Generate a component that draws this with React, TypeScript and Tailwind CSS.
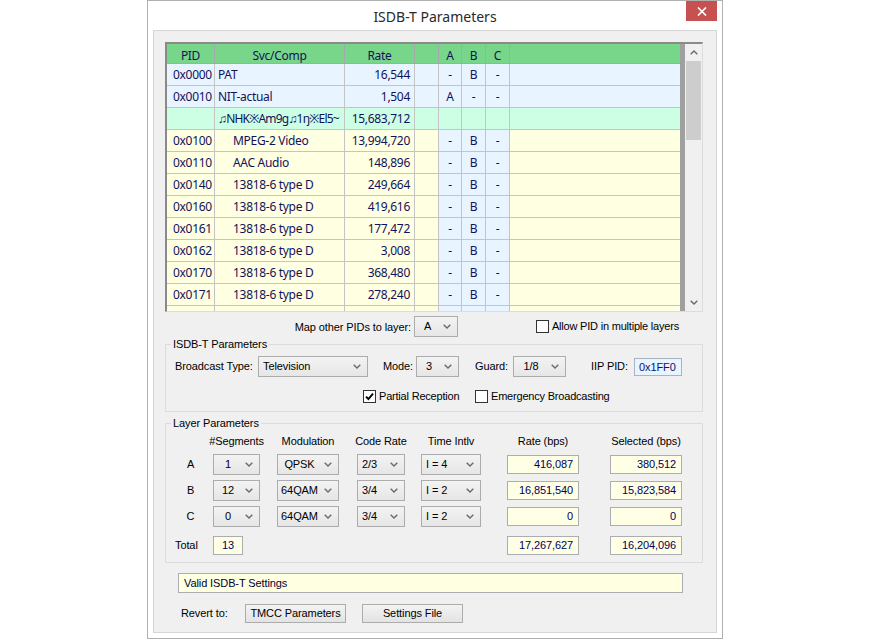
import React from 'react';

type Kind = 'psi' | 'svc' | 'comp';
interface Row { pid: string; svc: string; rate: string; a: string; b: string; c: string; kind: Kind; indent?: boolean }

const rows: Row[] = [
  { pid: '0x0000', svc: 'PAT', rate: '16,544', a: '-', b: 'B', c: '-', kind: 'psi' },
  { pid: '0x0010', svc: 'NIT-actual', rate: '1,504', a: 'A', b: '-', c: '-', kind: 'psi' },
  { pid: '', svc: '♫NHK※Am9g♫1ŋ※El5~', rate: '15,683,712', a: '', b: '', c: '', kind: 'svc' },
  { pid: '0x0100', svc: 'MPEG-2 Video', rate: '13,994,720', a: '-', b: 'B', c: '-', kind: 'comp', indent: true },
  { pid: '0x0110', svc: 'AAC Audio', rate: '148,896', a: '-', b: 'B', c: '-', kind: 'comp', indent: true },
  { pid: '0x0140', svc: '13818-6 type D', rate: '249,664', a: '-', b: 'B', c: '-', kind: 'comp', indent: true },
  { pid: '0x0160', svc: '13818-6 type D', rate: '419,616', a: '-', b: 'B', c: '-', kind: 'comp', indent: true },
  { pid: '0x0161', svc: '13818-6 type D', rate: '177,472', a: '-', b: 'B', c: '-', kind: 'comp', indent: true },
  { pid: '0x0162', svc: '13818-6 type D', rate: '3,008', a: '-', b: 'B', c: '-', kind: 'comp', indent: true },
  { pid: '0x0170', svc: '13818-6 type D', rate: '368,480', a: '-', b: 'B', c: '-', kind: 'comp', indent: true },
  { pid: '0x0171', svc: '13818-6 type D', rate: '278,240', a: '-', b: 'B', c: '-', kind: 'comp', indent: true },
  { pid: '', svc: '', rate: '', a: '', b: '', c: '', kind: 'comp' },
];

function rowBg(kind: Kind) {
  if (kind === 'psi') return 'bg-[#e8f4ff]';
  if (kind === 'svc') return 'bg-[#ccffe4]';
  return 'bg-[#ffffe2]';
}
function abcBg(kind: Kind) {
  if (kind === 'svc') return 'bg-[#ccffe4]';
  return 'bg-[#e8f4ff]';
}

function Chevron({ up = false }: { up?: boolean }) {
  return (
    <svg width="8" height="5" viewBox="0 0 8 5">
      <polyline
        points={up ? '0.7,4.3 4,1 7.3,4.3' : '0.7,0.7 4,4 7.3,0.7'}
        fill="none"
        stroke="#6a6a6a"
        strokeWidth="1.4"
      />
    </svg>
  );
}

function Select({ value, w, align = 'center' }: { value: string; w: string; align?: 'center' | 'left' }) {
  return (
    <div className={`${w} h-[21px] shrink-0 flex items-center border border-[#acacac] bg-linear-to-b from-[#f3f3f3] to-[#e6e6e6] text-black`}>
      <span className={align === 'left' ? 'flex-1 pl-[4px] text-left whitespace-nowrap' : 'flex-1 text-center whitespace-nowrap'}>{value}</span>
      <span className="w-[17px] flex justify-center pr-[3px]">
        <Chevron />
      </span>
    </div>
  );
}

function Check({ checked = false }: { checked?: boolean }) {
  return (
    <span className="w-[13px] h-[13px] shrink-0 border border-[#333333] bg-white flex items-center justify-center">
      {checked && (
        <svg width="9" height="9" viewBox="0 0 9 9">
          <path d="M1 4.6 L3.4 7 L8 1.6" fill="none" stroke="#000" strokeWidth="1.9" />
        </svg>
      )}
    </span>
  );
}

function Field({ value, w, align = 'right' }: { value: string; w: string; align?: 'right' | 'center' }) {
  return (
    <div className={`${w} h-[19px] shrink-0 border border-[#abadb3] bg-[#ffffe6] text-[#00005a] leading-[17px] ${align === 'right' ? 'text-right pr-[5px]' : 'text-center'}`}>
      {value}
    </div>
  );
}

function Grid() {
  return (
    <div className="w-[538px] h-[270px] flex border-t-2 border-l-2 border-r border-b border-t-[#8a8a8a] border-l-[#8a8a8a] border-r-[#dcdcdc] border-b-[#dcdcdc] font-['Noto_Sans',sans-serif] text-[12px] tracking-[-0.3px] text-[#12125a]">
      <div className="w-[513px] h-full overflow-hidden flex flex-col">
        <div className="h-[20px] shrink-0 flex bg-[#78d68b] border-b border-[#a8a8a8] leading-[19px] pt-[2px]">
          <div className="w-[48px] text-center border-r border-[#a8a8a8] -mt-[2px] pt-[2px]">PID</div>
          <div className="w-[130px] text-center border-r border-[#a8a8a8] -mt-[2px] pt-[2px]">Svc/Comp</div>
          <div className="w-[70px] text-center border-r border-[#a8a8a8] -mt-[2px] pt-[2px]">Rate</div>
          <div className="w-[24px] border-r border-[#a8a8a8] -mt-[2px]" />
          <div className="w-[23px] text-center border-r border-[#a8a8a8] -mt-[2px] pt-[2px]">A</div>
          <div className="w-[24px] text-center border-r border-[#a8a8a8] -mt-[2px] pt-[2px]">B</div>
          <div className="w-[24px] text-center border-r border-[#a8a8a8] -mt-[2px] pt-[2px]">C</div>
          <div className="flex-1" />
        </div>
        {rows.map((r, i) => (
          <div key={i} className={`h-[22px] shrink-0 flex border-b border-[#c4c4c4] leading-[20px] ${rowBg(r.kind)}`}>
            <div className="w-[48px] pl-[6px] pt-[1px] border-r border-[#c4c4c4]">{r.pid}</div>
            <div className={`w-[130px] pt-[1px] whitespace-nowrap overflow-hidden border-r border-[#c4c4c4] ${r.indent ? 'pl-[18px]' : 'pl-[3px]'} ${r.kind === 'svc' ? 'tracking-[-0.8px]' : ''}`}>{r.svc}</div>
            <div className="w-[70px] pt-[1px] text-right pr-[4px] border-r border-[#c4c4c4]">{r.rate}</div>
            <div className="w-[24px] border-r border-[#c4c4c4]" />
            <div className={`w-[23px] pt-[1px] text-center border-r border-[#c4c4c4] ${abcBg(r.kind)}`}>{r.a}</div>
            <div className={`w-[24px] pt-[1px] text-center border-r border-[#c4c4c4] ${abcBg(r.kind)}`}>{r.b}</div>
            <div className={`w-[24px] pt-[1px] text-center border-r border-[#c4c4c4] ${abcBg(r.kind)}`}>{r.c}</div>
            <div className="flex-1" />
          </div>
        ))}
      </div>
      <div className="w-[5px] h-full bg-[#a0a0a0]" />
      <div className="w-[17px] h-full bg-[#f0f0f0] flex flex-col">
        <div className="h-[17px] flex items-center justify-center">
          <Chevron up />
        </div>
        <div className="h-[79px] mx-[1px] bg-[#cdcdcd]" />
        <div className="flex-1" />
        <div className="h-[17px] flex items-center justify-center">
          <Chevron />
        </div>
      </div>
    </div>
  );
}

export default function App() {
  return (
    <div className="w-[870px] h-[639px] bg-white flex justify-center">
      <div className="w-[576px] h-[639px] border border-[#b0b0b0] bg-white flex flex-col font-['Liberation_Sans',Arial,sans-serif] text-[11px] tracking-[-0.1px] text-black">
        <div className="h-[29px] shrink-0 relative flex items-center justify-center">
          <span className="font-['Noto_Sans',sans-serif] text-[14px] tracking-normal text-[#2a2a2a] pt-[2px]">ISDB-T Parameters</span>
          <div className="absolute top-0 right-[5px] w-[31px] h-[20px] bg-[#c75050] flex items-center justify-center">
            <svg width="10" height="9" viewBox="0 0 10 9">
              <path d="M1 0.5 L9 8.5 M9 0.5 L1 8.5" stroke="#fff" strokeWidth="1.7" fill="none" />
            </svg>
          </div>
        </div>
        <div className="flex-1 mx-[5px] mb-[5px] bg-[#f0f0f0] border border-[#d6d6d6] pl-[11px] pt-[11px] flex flex-col">
          <Grid />

          <div className="w-[538px] h-[21px] mt-[4px] flex items-center">
            <div className="w-[293px] flex items-center justify-end gap-[3px]">
              <span className="whitespace-nowrap pt-[1px]">Map other PIDs to layer:</span>
              <Select value="A" w="w-[44px]" />
            </div>
            <label className="ml-auto mr-[24px] flex items-center gap-[3px] whitespace-nowrap">
              <Check />
              <span className="tracking-[-0.2px]">Allow PID in multiple layers</span>
            </label>
          </div>

          <fieldset className="w-[538px] mt-[1px] border border-[#dcdcdc] pb-[7px]">
            <legend className="ml-[5px] px-[2px] leading-[13px]">ISDB-T Parameters</legend>
            <div className="h-[21px] mt-[5px] flex items-center">
              <span className="ml-[9px] w-[83px] whitespace-nowrap">Broadcast Type:</span>
              <Select value="Television" w="w-[110px]" align="left" />
              <span className="ml-[15px] w-[33px] whitespace-nowrap">Mode:</span>
              <Select value="3" w="w-[43px]" />
              <span className="ml-[16px] w-[38px] whitespace-nowrap">Guard:</span>
              <Select value="1/8" w="w-[53px]" />
              <span className="ml-[25px] w-[43px] whitespace-nowrap">IIP PID:</span>
              <div className="w-[48px] h-[18px] border border-[#a9b3c2] bg-[#e8f4ff] text-[#10106a] leading-[16px] pl-[4px]">0x1FF0</div>
            </div>
            <div className="h-[15px] mt-[12px] flex items-center">
              <span className="ml-[197px]">
                <Check checked />
              </span>
              <span className="ml-[3px] w-[96px] whitespace-nowrap tracking-[-0.2px]">Partial Reception</span>
              <Check />
              <span className="ml-[3px] whitespace-nowrap tracking-[-0.2px]">Emergency Broadcasting</span>
            </div>
          </fieldset>

          <fieldset className="w-[538px] mt-[5px] border border-[#dcdcdc] pb-[7px]">
            <legend className="ml-[5px] px-[2px] leading-[13px]">Layer Parameters</legend>
            <div className="h-[14px] mt-[4px] flex items-center whitespace-nowrap">
              <div className="w-[47px]" />
              <div className="w-[47px] flex justify-center">#Segments</div>
              <div className="w-[62px] ml-[17px] flex justify-center">Modulation</div>
              <div className="w-[48px] ml-[18px] flex justify-center">Code Rate</div>
              <div className="w-[60px] ml-[16px] flex justify-center">Time Intlv</div>
              <div className="w-[72px] ml-[26px] flex justify-center">Rate (bps)</div>
              <div className="w-[72px] ml-[31px] flex justify-center">Selected (bps)</div>
            </div>
            {[
              { l: 'A', seg: '1', mod: 'QPSK', cr: '2/3', ti: 'I = 4', rate: '416,087', sel: '380,512', mt: 'mt-[6px]' },
              { l: 'B', seg: '12', mod: '64QAM', cr: '3/4', ti: 'I = 2', rate: '16,851,540', sel: '15,823,584', mt: 'mt-[5px]' },
              { l: 'C', seg: '0', mod: '64QAM', cr: '3/4', ti: 'I = 2', rate: '0', sel: '0', mt: 'mt-[5px]' },
            ].map((r) => (
              <div key={r.l} className={`h-[21px] flex items-center ${r.mt}`}>
                <div className="w-[47px] text-center pl-[2px]">{r.l}</div>
                <Select value={r.seg} w="w-[47px]" />
                <div className="ml-[17px]">
                  <Select value={r.mod} w="w-[62px]" />
                </div>
                <div className="ml-[18px]">
                  <Select value={r.cr} w="w-[48px]" align="left" />
                </div>
                <div className="ml-[16px]">
                  <Select value={r.ti} w="w-[60px]" align="left" />
                </div>
                <div className="ml-[26px]">
                  <Field value={r.rate} w="w-[72px]" />
                </div>
                <div className="ml-[31px]">
                  <Field value={r.sel} w="w-[72px]" />
                </div>
              </div>
            ))}
            <div className="h-[19px] mt-[9px] flex items-center">
              <div className="w-[47px] pl-[9px]">Total</div>
              <Field value="13" w="w-[30px]" align="center" />
              <div className="ml-[264px]">
                <Field value="17,267,627" w="w-[72px]" />
              </div>
              <div className="ml-[31px]">
                <Field value="16,204,096" w="w-[72px]" />
              </div>
            </div>
          </fieldset>

          <div className="ml-[13px] mt-[10px] w-[505px] h-[20px] border border-[#abadb3] bg-[#ffffe2] text-[#00003a] leading-[18px] pl-[5px]">
            Valid ISDB-T Settings
          </div>

          <div className="mt-[11px] h-[19px] flex items-center">
            <span className="ml-[16px] w-[64px] whitespace-nowrap">Revert to:</span>
            <div className="w-[101px] h-[19px] border border-[#acacac] bg-linear-to-b from-[#f3f3f3] to-[#e3e3e3] flex items-center justify-center whitespace-nowrap">TMCC Parameters</div>
            <div className="ml-[16px] w-[101px] h-[19px] border border-[#acacac] bg-linear-to-b from-[#f3f3f3] to-[#e3e3e3] flex items-center justify-center whitespace-nowrap">Settings File</div>
          </div>
        </div>
      </div>
    </div>
  );
}
